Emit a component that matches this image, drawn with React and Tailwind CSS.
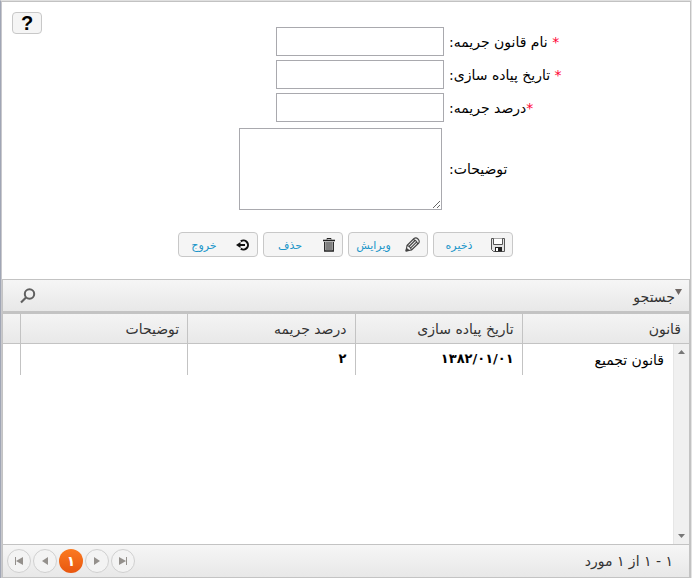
import React from "react";

const fields = [
  { id: "law-name", label: "نام قانون جریمه:", star: "* " },
  { id: "start-date", label: "تاریخ پیاده سازی:", star: "* " },
  { id: "percent", label: "درصد جریمه:", star: "*" },
];

function SaveIcon() {
  return (
    <svg width="14" height="14" viewBox="0 0 14 14" className="shrink-0" fill="none" stroke="#555" strokeWidth="1">
      <path d="M.5.5h13v13h-11l-2-2z" fill="#e4e4e4" />
      <path d="M2.500.5v6h9v-6" fill="#fff" />
      <path d="M4 9h7v4.500H4z" fill="#222" stroke="none" />
      <path d="M5 10h2v3H5z" fill="#fff" stroke="none" />
    </svg>
  );
}

function PencilIcon() {
  return (
    <svg width="15" height="15" viewBox="0 0 15 15" className="shrink-0" fill="none" stroke="#444" strokeWidth="1.100" strokeLinejoin="round">
      <path d="M1 14l1-5.500 7-7q2-1.500 4 .5t.8 4L6.500 13z" fill="#eee" />
      <path d="M2 8.500q3 .5 4.500 4.500M8 2.500q3.500.5 4.700 4.500M4 9.500l6-6M5.500 11.200l6-6" />
      <path d="M1 14l.5-2.500 2.500 2z" fill="#333" />
    </svg>
  );
}

function TrashIcon() {
  return (
    <svg width="12" height="14" viewBox="0 0 12 14" className="shrink-0" fill="none" stroke="#222">
      <path d="M4 1.500v-1h4v1" />
      <path d="M0 2.500h12" strokeWidth="1.600" />
      <path d="M1.700 4v9h8.600V4" strokeWidth="1.300" fill="#ddd" />
      <path d="M4 4v8M6 4v8M8 4v8" />
    </svg>
  );
}

function ExitIcon() {
  return (
    <svg width="14" height="12" viewBox="0 0 14 12" className="shrink-0" fill="none" stroke="#111" strokeWidth="2">
      <path d="M4.800 2.400A4.500 4.500 0 1 1 4.800 9.600" />
      <path d="M3 6h6" />
      <path d="M0 6l4.500-3v6z" fill="#111" stroke="none" />
    </svg>
  );
}

const actions = [
  { label: "ذخیره", Icon: SaveIcon },
  { label: "ویرایش", Icon: PencilIcon },
  { label: "حذف", Icon: TrashIcon },
  { label: "خروج", Icon: ExitIcon },
];

function PagerButton({ label, d }) {
  return (
    <button aria-label={label} className="flex size-6 items-center justify-center rounded-full border border-[#d0d0d0] bg-[#f3f3f3]">
      <svg width="8" height="8" viewBox="0 0 8 8" fill="#94908c">
        <path d={d} />
      </svg>
    </button>
  );
}

export default function App() {
  return (
    <div
      dir="rtl"
      className="flex min-h-screen flex-col border-t border-r border-l border-t-[#e0e0e0] border-r-[#e4e4e4] border-l-[#a0a6b5] bg-white font-['DejaVu_Sans',sans-serif] text-sm text-black"
    >
      <div className="flex grow flex-col border-t border-r border-l border-t-[#c2c2c2] border-r-[#c2c2c2] border-l-[#c8c8cc]">
        <div className="flex flex-row-reverse pt-[10px] pl-[10px]">
          <button aria-label="راهنما" className="flex h-[22px] w-[30px] items-center justify-center rounded border border-[#c8c8c8] bg-[#f5f5f5] font-['Liberation_Sans',sans-serif] text-xl font-bold">
            ?
          </button>
        </div>

        <form className="-mt-[7px] flex flex-col items-center" onSubmit={(e) => e.preventDefault()}>
          <div className="grid grid-cols-[120px_205px] gap-x-[5px] gap-y-1 pl-[116px]">
            {fields.map((f) => (
              <React.Fragment key={f.id}>
                <label htmlFor={f.id} className="self-center text-left whitespace-nowrap">
                  <span className="text-[#ff0033]">{f.star}</span>
                  {f.label}
                </label>
                <input id={f.id} type="text" className="h-[29px] w-[168px] border border-[#a9a9ae] bg-white px-2 outline-none" />
              </React.Fragment>
            ))}
            <label htmlFor="notes" className="self-center pt-[2px] text-left">توضیحات:</label>
            <textarea id="notes" dir="ltr" className="mt-[2px] mr-[2px] block h-[82px] w-[203px] resize border border-[#a9a9ae] bg-white p-1 outline-none" />
          </div>

          <div className="mt-[22px] flex gap-[5px] pr-[2px]">
            {actions.map(({ label, Icon }) => (
              <button key={label} className="flex h-[25px] w-20 items-center rounded border border-[#c8c8c8] bg-[#f5f5f5] px-[7px] text-[11px] text-[#1b95c9]">
                <Icon />
                <span className="grow pt-[2px] pr-[13px] text-center whitespace-nowrap">{label}</span>
              </button>
            ))}
          </div>
        </form>

        <section className="mt-[22px] flex grow flex-col border-t border-r border-b border-l border-[#c3c3c3] text-[#333]">
          <div className="flex h-[34px] items-center justify-between border-b-3 border-[#c3c3c3] bg-linear-to-b from-[#f6f6f6] to-[#e8e8e8] pr-[7px] pl-[17px]">
            <button className="flex items-center">
              <svg width="7" height="6" viewBox="0 0 7 6" className="-mt-2 shrink-0" fill="#706865">
                <path d="M0 0h7L3.500 6z" />
              </svg>
              <span className="pt-[2px]">جستجو</span>
            </button>
            <button aria-label="جستجو">
              <svg width="16" height="16" viewBox="0 0 16 16" fill="none" stroke="#606060">
                <circle cx="9.500" cy="6" r="4.700" strokeWidth="2" />
                <path d="M6 9.500l-5 5" strokeWidth="2.200" />
              </svg>
            </button>
          </div>

          <div className="relative grow">
            <table className="w-full table-fixed border-separate border-spacing-0">
              <colgroup>
                <col />
                <col />
                <col />
                <col />
                <col className="w-[17px]" />
              </colgroup>
              <thead>
                <tr className="h-[30px] bg-linear-to-b from-[#f4f4f4] to-[#e8e8e8]">
                  {["قانون", "تاریخ پیاده سازی", "درصد جریمه", "توضیحات", ""].map((h, i) => (
                    <th key={i} className="border-b border-l border-[#c3c3c3] p-0 pr-2 text-right font-normal whitespace-nowrap last:border-l-0">
                      {h}
                    </th>
                  ))}
                </tr>
              </thead>
              <tbody>
                <tr className="h-[31px] text-black">
                  <td className="border-l border-[#c3c3c3] pr-[25px]">قانون تجمیع</td>
                  <td className="border-l border-[#c3c3c3] pr-2 text-[13px] font-bold">۱۳۸۲/۰۱/۰۱</td>
                  <td className="border-l border-[#c3c3c3] pr-2 text-[13px] font-bold">۲</td>
                  <td className="border-l border-[#c3c3c3]" />
                  <td />
                </tr>
              </tbody>
            </table>
            <div aria-hidden="true" className="absolute top-[30px] right-0 bottom-0 flex w-4 flex-col items-center justify-between border-l border-[#e6e6e6] bg-[#f0f0f0] py-[6px]">
              <svg width="7" height="4" viewBox="0 0 7 4" fill="#777"><path d="M0 4h7L3.500 0z" /></svg>
              <svg width="7" height="4" viewBox="0 0 7 4" fill="#777"><path d="M0 0h7L3.500 4z" /></svg>
            </div>
          </div>

          <div className="flex h-[33px] items-center justify-between border-t border-[#c3c3c3] bg-linear-to-b from-[#f6f6f6] to-[#e8e8e8] pr-4 pl-1">
            <span>۱ - ۱ از ۱ مورد</span>
            <nav dir="ltr" className="flex items-center gap-[2px]">
              <PagerButton label="صفحه اول" d="M0 0h1v8H0zM1 4l7-4v8z" />
              <PagerButton label="صفحه قبل" d="M1 4l6-4v8z" />
              <button aria-current="page" className="flex size-6 items-center justify-center rounded-full bg-linear-to-b from-[#fb7a20] to-[#e8560f] font-bold text-white">
                ۱
              </button>
              <PagerButton label="صفحه بعد" d="M1 0l6 4-6 4z" />
              <PagerButton label="صفحه آخر" d="M0 0l7 4-7 4zM7 0h1v8H7z" />
            </nav>
          </div>
        </section>
      </div>
    </div>
  );
}
